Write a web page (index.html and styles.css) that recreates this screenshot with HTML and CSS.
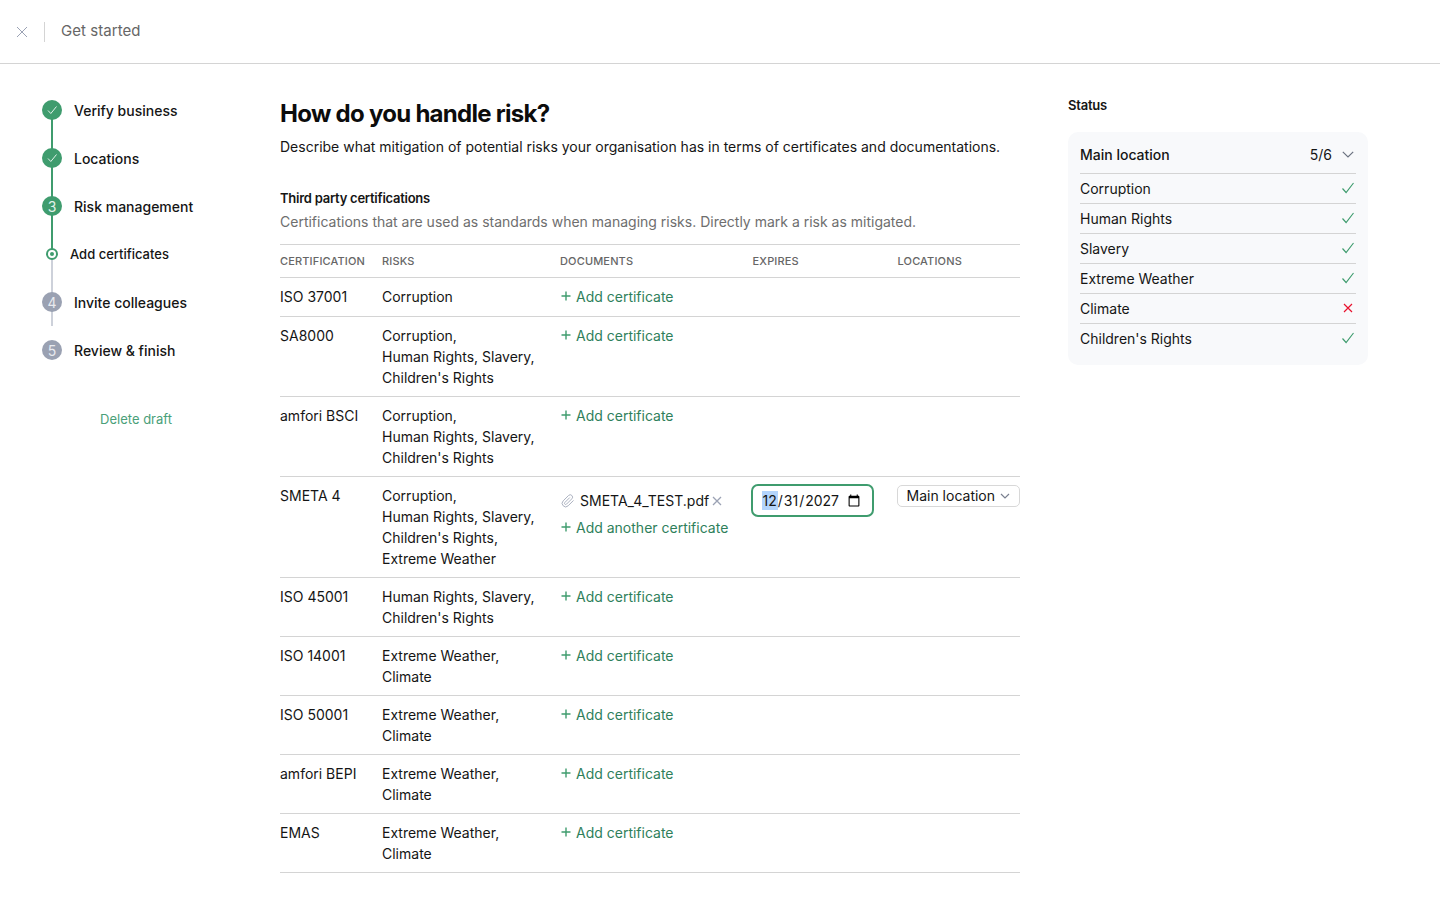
FILE: index.html
```html
<!DOCTYPE html>
<html lang="en">
<head>
  <meta charset="UTF-8">
  <meta name="viewport" content="width=device-width, initial-scale=1.0">
  <title>Get started</title>
  <link rel="stylesheet" href="styles.css">
</head>
<body>
  <header class="topbar">
    <svg class="topbar-close" width="12" height="12" viewBox="0 0 12 12"><path d="M1 1l10 10M11 1L1 11"/></svg>
    <span class="topbar-divider"></span>
    <span class="topbar-title">Get started</span>
  </header>

  <div class="page">
    <nav class="sidebar">
      <ol class="steps">
        <li class="step step-first">
          <span class="rail rail-green"><span class="dot dot-green"><svg width="12" height="12" viewBox="0 0 12 12"><path d="M2 6.5l2.8 3L10.5 2.5"/></svg></span></span>
          <span class="step-label">Verify business</span>
        </li>
        <li class="step">
          <span class="rail rail-green"><span class="dot dot-green"><svg width="12" height="12" viewBox="0 0 12 12"><path d="M2 6.5l2.8 3L10.5 2.5"/></svg></span></span>
          <span class="step-label">Locations</span>
        </li>
        <li class="step">
          <span class="rail rail-green"><span class="dot dot-green">3</span></span>
          <span class="step-label">Risk management</span>
        </li>
        <li class="step step-sub">
          <span class="rail rail-split"><span class="dot-small"></span></span>
          <span class="step-label">Add certificates</span>
        </li>
        <li class="step">
          <span class="rail rail-grey"><span class="dot dot-grey">4</span></span>
          <span class="step-label">Invite colleagues</span>
        </li>
        <li class="step step-last">
          <span class="rail"><span class="dot dot-grey">5</span></span>
          <span class="step-label">Review &amp; finish</span>
        </li>
      </ol>
      <a class="delete-draft">Delete draft</a>
    </nav>

    <main class="content">
      <h1>How do you handle risk?</h1>
      <p class="lead">Describe what mitigation of potential risks your organisation has in terms of certificates and documentations.</p>

      <h2>Third party certifications</h2>
      <p class="hint">Certifications that are used as standards when managing risks. Directly mark a risk as mitigated.</p>

      <table class="cert-table">
        <colgroup>
          <col class="col-cert"><col class="col-risks"><col class="col-docs"><col class="col-expires"><col class="col-locations">
        </colgroup>
        <thead>
          <tr><th>Certification</th><th>Risks</th><th>Documents</th><th>Expires</th><th>Locations</th></tr>
        </thead>
        <tbody>
          <tr>
            <td>ISO 37001</td>
            <td>Corruption</td>
            <td><a class="add-link"><svg width="10" height="10" viewBox="0 0 10 10"><path d="M5 .5v9M.5 5h9"/></svg>Add certificate</a></td>
            <td></td><td></td>
          </tr>
          <tr>
            <td>SA8000</td>
            <td>Corruption,<br>Human Rights, Slavery,<br>Children's Rights</td>
            <td><a class="add-link"><svg width="10" height="10" viewBox="0 0 10 10"><path d="M5 .5v9M.5 5h9"/></svg>Add certificate</a></td>
            <td></td><td></td>
          </tr>
          <tr>
            <td>amfori BSCI</td>
            <td>Corruption,<br>Human Rights, Slavery,<br>Children's Rights</td>
            <td><a class="add-link"><svg width="10" height="10" viewBox="0 0 10 10"><path d="M5 .5v9M.5 5h9"/></svg>Add certificate</a></td>
            <td></td><td></td>
          </tr>
          <tr>
            <td>SMETA 4</td>
            <td>Corruption,<br>Human Rights, Slavery,<br>Children's Rights,<br>Extreme Weather</td>
            <td>
              <div class="file">
                <svg class="file-clip" width="14" height="14" viewBox="0 0 24 24"><path d="M21.44 11.05l-9.19 9.19a6 6 0 0 1-8.49-8.49l9.19-9.19a4 4 0 0 1 5.66 5.66l-9.2 9.19a2 2 0 0 1-2.83-2.83l8.49-8.48"/></svg>
                <span>SMETA_4_TEST.pdf</span>
                <svg class="file-remove" width="10" height="10" viewBox="0 0 10 10"><path d="M1 1l8 8M9 1L1 9"/></svg>
              </div>
              <a class="add-link"><svg width="10" height="10" viewBox="0 0 10 10"><path d="M5 .5v9M.5 5h9"/></svg>Add another certificate</a>
            </td>
            <td><input class="date-input" type="date" value="2027-12-31"></td>
            <td>
              <div class="location-select">Main location<svg width="10" height="6" viewBox="0 0 10 6"><path d="M1 1l4 4 4-4"/></svg></div>
            </td>
          </tr>
          <tr>
            <td>ISO 45001</td>
            <td>Human Rights, Slavery,<br>Children's Rights</td>
            <td><a class="add-link"><svg width="10" height="10" viewBox="0 0 10 10"><path d="M5 .5v9M.5 5h9"/></svg>Add certificate</a></td>
            <td></td><td></td>
          </tr>
          <tr>
            <td>ISO 14001</td>
            <td>Extreme Weather,<br>Climate</td>
            <td><a class="add-link"><svg width="10" height="10" viewBox="0 0 10 10"><path d="M5 .5v9M.5 5h9"/></svg>Add certificate</a></td>
            <td></td><td></td>
          </tr>
          <tr>
            <td>ISO 50001</td>
            <td>Extreme Weather,<br>Climate</td>
            <td><a class="add-link"><svg width="10" height="10" viewBox="0 0 10 10"><path d="M5 .5v9M.5 5h9"/></svg>Add certificate</a></td>
            <td></td><td></td>
          </tr>
          <tr>
            <td>amfori BEPI</td>
            <td>Extreme Weather,<br>Climate</td>
            <td><a class="add-link"><svg width="10" height="10" viewBox="0 0 10 10"><path d="M5 .5v9M.5 5h9"/></svg>Add certificate</a></td>
            <td></td><td></td>
          </tr>
          <tr>
            <td>EMAS</td>
            <td>Extreme Weather,<br>Climate</td>
            <td><a class="add-link"><svg width="10" height="10" viewBox="0 0 10 10"><path d="M5 .5v9M.5 5h9"/></svg>Add certificate</a></td>
            <td></td><td></td>
          </tr>
        </tbody>
      </table>
    </main>

    <aside class="status">
      <h3>Status</h3>
      <div class="status-card">
        <div class="status-head">
          <span class="status-name">Main location</span>
          <span class="status-count">5/6</span>
          <svg class="status-chevron" width="12" height="7" viewBox="0 0 12 7"><path d="M.8.8L6 6l5.2-5.2"/></svg>
        </div>
        <div class="status-row">Corruption<svg class="icon-ok" width="14" height="12" viewBox="0 0 14 12"><path d="M1.5 6.5l3.6 4L12.5 1"/></svg></div>
        <div class="status-row">Human Rights<svg class="icon-ok" width="14" height="12" viewBox="0 0 14 12"><path d="M1.5 6.5l3.6 4L12.5 1"/></svg></div>
        <div class="status-row">Slavery<svg class="icon-ok" width="14" height="12" viewBox="0 0 14 12"><path d="M1.5 6.5l3.6 4L12.5 1"/></svg></div>
        <div class="status-row">Extreme Weather<svg class="icon-ok" width="14" height="12" viewBox="0 0 14 12"><path d="M1.5 6.5l3.6 4L12.5 1"/></svg></div>
        <div class="status-row">Climate<svg class="icon-bad" width="14" height="12" viewBox="0 0 14 12"><path d="M3 2l8 8M11 2l-8 8"/></svg></div>
        <div class="status-row">Children's Rights<svg class="icon-ok" width="14" height="12" viewBox="0 0 14 12"><path d="M1.5 6.5l3.6 4L12.5 1"/></svg></div>
      </div>
    </aside>
  </div>
</body>
</html>
```

FILE: styles.css
```css
* {
  box-sizing: border-box;
}
body {
  font-family: Inter, "Liberation Sans", sans-serif;
  font-size: 14px;
  line-height: 21px;
  color: #151515;
  background-color: white;
  margin: 0;
}
svg {
  fill: none;
  stroke: currentColor;
  flex-shrink: 0;
}

/* top bar */
.topbar {
  height: 64px;
  border-bottom: 1px solid #d4d4d4;
  display: flex;
  align-items: center;
  padding-left: 16px;
}
.topbar-close {
  color: #9ba2b4;
  margin-top: 1px;
}
.topbar-divider {
  width: 1px;
  height: 20px;
  background-color: #d4d4d4;
  margin-left: 16px;
  margin-right: 16px;
}
.topbar-title {
  font-size: 15px;
  letter-spacing: 0.05px;
  color: #666;
  margin-top: -3px;
}

.page {
  display: flex;
  align-items: flex-start;
  padding-left: 42px;
}

/* steps */
.sidebar {
  width: 188px;
  margin-right: 50px;
  padding-top: 22px;
}
.steps {
  list-style: none;
  margin: 0;
  padding: 0;
}
.step {
  height: 48px;
  display: flex;
  gap: 12px;
}
.step-label {
  align-self: center;
  font-weight: 500;
}
.step-sub .step-label {
  font-size: 13px;
}
.rail {
  width: 20px;
  display: flex;
  align-items: center;
  justify-content: center;
  background-repeat: no-repeat;
  background-position: center;
  background-size: 2px 100%;
}
.rail-green {
  background-image: linear-gradient(#3f9c6e, #3f9c6e);
}
.rail-grey {
  background-image: linear-gradient(#cdd1da, #cdd1da);
}
.rail-split {
  background-image: linear-gradient(#3f9c6e 50%, #cdd1da 50%);
}
.step-first .rail {
  background-position: center bottom;
  background-size: 2px 50%;
}
.step-sub .rail {
  width: 12px;
  margin-left: 4px;
}
.dot {
  width: 20px;
  height: 20px;
  border-radius: 50%;
  color: white;
  font-size: 14px;
  display: flex;
  align-items: center;
  justify-content: center;
}
.dot svg {
  stroke-width: 1;
}
.dot-green {
  background-color: #3f9c6e;
  color: #e2f2ea;
}
.dot-grey {
  background-color: #9aa1b2;
  color: #e8eaef;
}
.dot-small {
  width: 12px;
  height: 12px;
  border-radius: 50%;
  background-color: white;
  border: 2px solid #3f9c6e;
  display: flex;
  align-items: center;
  justify-content: center;
}
.dot-small::after {
  content: "";
  width: 4px;
  height: 4px;
  border-radius: 50%;
  background-color: #3f9c6e;
}
.delete-draft {
  display: block;
  text-align: center;
  font-size: 13px;
  color: #4aa079;
  margin-top: 35px;
}

/* main column */
.content {
  width: 740px;
  padding-top: 33px;
}
h1 {
  font-size: 24px;
  line-height: 34px;
  font-weight: 700;
  letter-spacing: -0.72px;
  color: #0c0c0c;
  margin: 0 0 5px;
}
.lead {
  margin: 0 0 31px;
}
h2 {
  font-size: 13px;
  line-height: 20px;
  font-weight: 600;
  letter-spacing: -0.25px;
  margin: 0 0 3px;
}
.hint {
  color: #6e6e6e;
  margin: 0 0 12px;
}
.cert-table {
  width: 740px;
  table-layout: fixed;
  border-collapse: collapse;
}
.col-cert {
  width: 102px;
}
.col-risks {
  width: 178px;
}
.col-docs {
  width: 192.5px;
}
.col-expires {
  width: 145px;
}
.col-locations {
  width: 122.5px;
}
.cert-table th {
  font-size: 11px;
  line-height: 16px;
  font-weight: 500;
  text-transform: uppercase;
  letter-spacing: 0.15px;
  text-align: left;
  color: #666;
  padding: 8px 0;
  border-top: 1px solid #d4d4d4;
  border-bottom: 1px solid #d4d4d4;
}
.cert-table td {
  vertical-align: top;
  padding: 8px 0;
  border-bottom: 1px solid #d4d4d4;
}
.add-link {
  padding-bottom: 1px;
  padding-left: 1px;
  display: flex;
  align-items: center;
  gap: 5px;
  color: #2f7f5b;
}
.add-link svg {
  margin-top: -1px;
  stroke-width: 1.4;
  color: #3f9c6e;
}
.file {
  display: flex;
  align-items: center;
  margin-top: 5px;
  margin-bottom: 6px;
}
.file-clip {
  color: #aab0bf;
  stroke-width: 1.7;
  margin-left: 1px;
  margin-right: 5px;
}
.file-remove {
  color: #9ba2b4;
  stroke-width: 1.3;
  margin-left: 3px;
}
.date-input {
  width: 123px;
  height: 33px;
  margin-top: -1px;
  margin-left: -2px;
  padding: 0 9px;
  border: 2px solid #3f9c6e;
  border-radius: 7px;
  outline: none;
  font-family: inherit;
  font-size: 14px;
  color: #151515;
  background-color: white;
  display: block;
}
.date-input::-webkit-datetime-edit-month-field {
  background-color: #b3d4fc;
  color: #151515;
}
.location-select {
  height: 22px;
  margin-left: -1px;
  padding: 0 9px 1px;
  border: 1px solid #d8d8d8;
  border-radius: 5px;
  display: flex;
  align-items: center;
  justify-content: space-between;
}
.location-select svg {
  color: #7a8090;
  stroke-width: 1.2;
}

/* status */
.status {
  width: 300px;
  margin-left: 48px;
  padding-top: 31px;
}
h3 {
  font-size: 13px;
  line-height: 21px;
  font-weight: 600;
  letter-spacing: -0.2px;
  margin: 0 0 16px;
}
.status-card {
  background-color: #f8f9fb;
  border-radius: 10px;
  padding: 12px;
  height: 233px;
}
.status-head {
  height: 30px;
  padding-bottom: 9px;
  display: flex;
  align-items: center;
  border-bottom: 1px solid #d4d4d4;
}
.status-name {
  flex: 1;
  font-weight: 500;
}
.status-chevron {
  color: #6b7280;
  margin-left: 10px;
  margin-right: 2px;
  stroke-width: 1.2;
}
.status-row {
  height: 30px;
  display: flex;
  align-items: center;
  justify-content: space-between;
  border-bottom: 1px solid #d4d4d4;
}
.status-row:last-child {
  border-bottom-color: transparent;
}
.status-row svg {
  margin-top: -2px;
  margin-right: 1px;
  stroke-width: 1.15;
}
.icon-ok {
  color: #3f9c6e;
}
.icon-bad {
  color: #e8112d;
}
```
